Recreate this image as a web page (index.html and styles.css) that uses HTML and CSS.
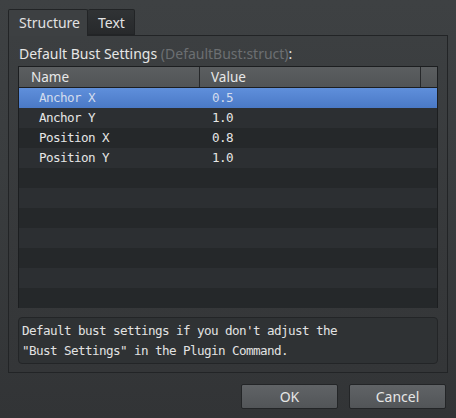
FILE: index.html
```html
<!DOCTYPE html>
<html>
<head>
<meta charset="utf-8">
<link rel="stylesheet" href="styles.css">
</head>
<body>
<div class="window">
  <div class="tabs">
    <div class="tab active">Structure</div>
    <div class="tab">Text</div>
  </div>
  <div class="pane">
    <div class="label">Default Bust Settings <span class="hint">(DefaultBust:struct)</span>:</div>
    <div class="table">
      <div class="thead">
        <div class="th name">Name</div>
        <div class="th value">Value</div>
        <div class="th corner"></div>
      </div>
      <div class="row selected"><div class="c1">Anchor X</div><div class="c2">0.5</div></div>
      <div class="row odd"><div class="c1">Anchor Y</div><div class="c2">1.0</div></div>
      <div class="row"><div class="c1">Position X</div><div class="c2">0.8</div></div>
      <div class="row odd"><div class="c1">Position Y</div><div class="c2">1.0</div></div>
      <div class="row"></div>
      <div class="row odd"></div>
      <div class="row"></div>
      <div class="row odd"></div>
      <div class="row"></div>
      <div class="row odd"></div>
      <div class="row"></div>
    </div>
    <div class="desc">Default bust settings if you don't adjust the<br>"Bust Settings" in the Plugin Command.</div>
  </div>
  <div class="buttons">
    <div class="btn">OK</div>
    <div class="btn">Cancel</div>
  </div>
</div>
</body>
</html>
```

FILE: styles.css
```css
html, body {
  margin: 0;
  padding: 0;
}
body {
  width: 456px;
  height: 418px;
  overflow: hidden;
  font-family: "Noto Sans", "DejaVu Sans", sans-serif;
  color: #e4e4e4;
}
.window {
  width: 456px;
  height: 418px;
  box-sizing: border-box;
  padding: 9px 9px 0 8px;
  background: linear-gradient(#3e4143, #3a3d3f 40%, #323436);
  display: flex;
  flex-direction: column;
}
.tabs {
  display: flex;
  height: 26px;
  position: relative;
  z-index: 1;
}
.tab {
  box-sizing: border-box;
  height: 26px;
  border: 1px solid #222426;
  border-bottom: none;
  border-radius: 2px 2px 0 0;
  font-size: 14px;
  line-height: 25px;
  padding: 0 9px 0 9px;
  color: #e2e2e2;
  background: linear-gradient(#303335, #27292b);
}
.tab.active {
  width: 80px;
  background: #3d4042;
  height: 27px;
  padding-left: 10px;
}
.tab + .tab {
  border-left: none;
  width: 47px;
  height: 26px;
  border-bottom: 1px solid #222426;
  padding-left: 10px;
}
.pane {
  box-sizing: border-box;
  width: 440px;
  height: 338px;
  border: 1px solid #222426;
  background: linear-gradient(#3c3f41, #37393b 60%, #343638);
  padding: 6px 9px 0 9px;
  display: flex;
  flex-direction: column;
}
.label {
  font-size: 14px;
  line-height: 24px;
  height: 24px;
  color: #e6e6e6;
  margin-left: 1px;
}
.hint {
  color: #6c6f72;
}
.table {
  box-sizing: border-box;
  width: 420px;
  height: 242px;
  border: 1px solid #1c1e20;
  background: #25282a;
}
.thead {
  display: flex;
  height: 20px;
  border-bottom: 1px solid #1c1e20;
  background: linear-gradient(#5b5e60, #515456);
}
.th {
  box-sizing: border-box;
  font-size: 13.5px;
  line-height: 20px;
  color: #e8e8e8;
  border-right: 1px solid #26282a;
}
.th.name {
  width: 181px;
  padding-left: 12px;
}
.th.value {
  width: 221px;
  padding-left: 11px;
}
.th.corner {
  flex: 1;
  border-right: none;
}
.row {
  display: flex;
  height: 20px;
  background: #25282a;
  font-family: "DejaVu Sans Mono", "Liberation Mono", monospace;
  font-size: 12.6px;
  letter-spacing: -0.58px;
  line-height: 20px;
  color: #e6e6e6;
}
.row.odd {
  background: #2c2f32;
}
.row.selected {
  background: linear-gradient(#5f8fdb, #4a79c6);
  color: #d2dcee;
}
.c1 {
  width: 181px;
  padding-left: 20px;
  box-sizing: border-box;
}
.c2 {
  padding-left: 12px;
}
.desc {
  box-sizing: border-box;
  margin-top: 9px;
  width: 420px;
  height: 47px;
  border: 1px solid #232527;
  border-radius: 4px;
  background: #2f3234;
  font-family: "DejaVu Sans Mono", "Liberation Mono", monospace;
  font-size: 12.6px;
  letter-spacing: -0.58px;
  line-height: 20px;
  padding: 3px 0 0 3px;
  color: #e2e2e2;
}
.buttons {
  display: flex;
  justify-content: flex-end;
  gap: 11px;
  margin-top: 11px;
  padding-right: 1px;
}
.btn {
  box-sizing: border-box;
  width: 97px;
  height: 25px;
  border: 1px solid #232527;
  border-radius: 2px;
  background: linear-gradient(#606366, #525558);
  font-size: 14px;
  line-height: 23px;
  text-align: center;
  color: #e6e6e6;
}
```
